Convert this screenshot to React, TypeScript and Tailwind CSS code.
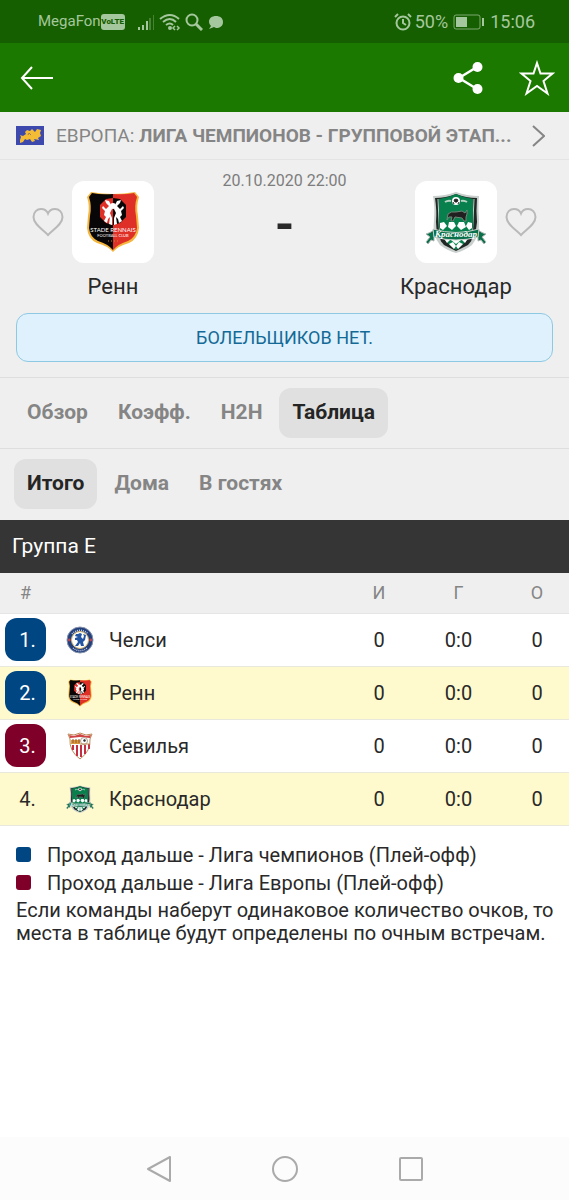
import React from "react";

const RennesCrest = ({ className }: { className: string }) => (
  <svg viewBox="0 0 54 62" className={className} aria-hidden="true">
    <path d="M5 1Q27 5 49 1L53 6Q50 15 52 25L53 37Q52 48 43 52Q32 55 27 61Q22 55 11 52Q2 48 1 37L2 25Q4 15 1 6Z" fill="#f4b63f" />
    <path d="M27 3Q15 4 6 2L3 6Q6 15 4 25L3 37Q4 46 12 50Q22 53 27 59Z" fill="#080606" />
    <path d="M27 3Q39 4 48 2L51 6Q48 15 50 25L51 37Q50 46 42 50Q32 53 27 59Z" fill="#df3028" />
    <path d="M27 7L20 8L14 14V26L20 32L27 34Z" fill="#df3028" />
    <path d="M27 7L34 8L40 14V26L34 32L27 34Z" fill="#080606" />
    <g fill="#fff">
      <path d="M25 14L23 10L19 9L20 12L23 15L20 18L17 15L16 17L19 20L18 24L20 26L18 30L21 32L22 28L24 26L23 33L26 34L26 27L24 22L26 18Z" />
      <path d="M29 14L31 10L35 9L34 12L31 15L34 18L37 15L38 17L35 20L36 24L34 26L36 30L33 32L32 28L30 26L31 33L28 34L28 27L30 22L28 18Z" />
      <circle cx="27" cy="15" r="3" />
    </g>
    <text x="27" y="41" textAnchor="middle" fontFamily="Lato, sans-serif" fontSize="6" fill="#fff">STADE RENNAIS</text>
    <text x="27" y="46" textAnchor="middle" fontFamily="Lato, sans-serif" fontSize="4" fill="#fff">FOOTBALL CLUB</text>
    <path d="M22 50H32" stroke="#c9862c" strokeWidth="1" strokeDasharray="1 2" />
  </svg>
);

const KrasnodarCrest = ({ className }: { className: string }) => (
  <svg viewBox="0 0 62 62" className={className} aria-hidden="true">
    <path d="M8 5Q20 5 31 1Q42 5 54 5Q53 15 54 28Q55 44 47 54Q39 60 31 62Q23 60 15 54Q7 44 9 28Q10 15 8 5Z" fill="#c9cfcc" />
    <path d="M10 7Q21 7 31 3Q41 7 52 7Q51 20 52 31Q51 46 43 54L31 60L19 54Q11 46 11 31Q12 20 10 7Z" fill="#202724" />
    <path d="M13 8L15 52" stroke="#c9cfcc" strokeWidth="1" />
    <path d="M49 8L47 52" stroke="#c9cfcc" strokeWidth="1" />
    <path d="M14 8Q23 7 31 3Q39 7 48 8V36Q46 49 31 59Q16 49 14 36Z" fill="#08804d" />
    <g fill="#fff">
      <path d="M15 32L19 31L22 35L18 39L15 37ZM24 31H29L31 35L27 39L23 36ZM34 31H39L41 36L36 39L32 35ZM43 31L47 32V37L44 39L41 35Z" />
      <path d="M18 46L23 44L26 48L22 52ZM28 45H34L36 49L31 53L26 49ZM39 44L44 46L40 52L36 48ZM24 53L28 51L31 55L29 58ZM34 51L38 53L33 58L31 55Z" />
      <circle cx="31" cy="10" r="4" />
    </g>
    <path d="M31 8L33 9L32 11H30L29 9ZM28 11L29 13M34 11L33 13" fill="#202724" stroke="#202724" />
    <path d="M20 11Q23 9 26 10M36 10Q39 9 42 11" fill="none" stroke="#b5d1c2" strokeWidth="2" />
    <path d="M22 29L23 23Q26 20 31 21L37 20L40 22L42 19V23L41 26L41 30H39L37 27L30 26L28 30H26L27 26L24 26Z" fill="#211f20" stroke="#6f8878" strokeWidth="1" />
    <path d="M1 51L5 46L1 43Q5 42 9 39V50L6 49L3 53ZM61 51L57 46L61 43Q57 42 53 39V50L56 49L59 53Z" fill="#08704a" stroke="#adb6b2" />
    <path d="M8 38Q31 45 54 38L53 46Q31 52 9 46Z" fill="#08704a" stroke="#c9cfcc" strokeWidth="1" />
    <text x="31" y="46" textAnchor="middle" fontFamily="Liberation Serif, serif" fontStyle="italic" fontWeight="700" fontSize="9" fill="#fff">Краснодар</text>
  </svg>
);

const ChelseaCrest = ({ className }: { className: string }) => (
  <svg viewBox="0 0 28 28" className={className} aria-hidden="true">
    <circle cx="14" cy="14" r="13" fill="#233f7c" stroke="#8794ad" />
    <circle cx="14" cy="14" r="8.5" fill="#fff" stroke="#d4b56a" />
    <path d="M6 8A10.500 10.500 0 0 1 22 8M7 22A10.500 10.500 0 0 0 21 22" fill="none" stroke="#c1cbe0" strokeWidth="1.5" strokeDasharray="1 1" />
    <circle cx="3.3" cy="14" r="1.4" fill="#b8475c" />
    <circle cx="24.7" cy="14" r="1.4" fill="#b8475c" />
    <path d="M12 8L14 7L16 8L15 11L17 13L18 10L17 8L20 9L19 14L17 16L18 20H15L14 17L12 20H9L12 16L11 14H9V12L12 11L9 10L10 8Z" fill="#2455a2" />
  </svg>
);

const SevillaCrest = ({ className }: { className: string }) => (
  <svg viewBox="0 0 28 28" className={className} aria-hidden="true">
    <path d="M2 2L8 3L14 1L20 3L26 2L24 7Q25 19 14 27Q3 19 4 7Z" fill="#fff" stroke="#c08a58" />
    <path d="M7 13V18M11 13V24M15 13V25M19 13V22M23 12V17" stroke="#c52f43" strokeWidth="2" />
    <path d="M3 3L8 4L14 2L20 4L25 3L24 6L14 5L4 6Z" fill="#cf4545" />
    <path d="M5 8H14V12H5Z" fill="#d99a3d" />
    <path d="M7 7V11M10 7V11M13 7V11" stroke="#995126" />
    <circle cx="18" cy="9" r="3.5" fill="#fff" stroke="#aaa18f" />
    <path d="M14 12H24" stroke="#c08a58" />
    <path d="M17 8L19 7L20 9L18 10Z" fill="#333" />
  </svg>
);

const Heart = () => (
  <svg viewBox="0 0 32 30" className="h-[30px] w-8 fill-none stroke-[#b9b9b9] stroke-2" aria-hidden="true">
    <path d="M16 28C10 22 1.500 17 1.500 10C1.500 5 5 2 9 2C12 2 15 4 16 6.500C17 4 20 2 23 2C27 2 30.500 5 30.500 10C30.500 17 22 22 16 28Z" />
  </svg>
);

type Crest = React.ComponentType<{ className: string }>;

const rows: { name: string; Crest: Crest; badge: string; row: string }[] = [
  { name: "Челси", Crest: ChelseaCrest, badge: "bg-[#004682] text-white", row: "bg-white" },
  { name: "Ренн", Crest: RennesCrest, badge: "bg-[#004682] text-white", row: "bg-[#fffacd]" },
  { name: "Севилья", Crest: SevillaCrest, badge: "bg-[#7f0029] text-white", row: "bg-white" },
  { name: "Краснодар", Crest: KrasnodarCrest, badge: "", row: "bg-[#fffacd]" },
];

function Team({ name, Crest, away = false }: { name: string; Crest: Crest; away?: boolean }) {
  return (
    <div className={away ? "flex w-[154px] flex-col items-start" : "flex w-[154px] flex-col items-end"}>
      <div className={away ? "flex flex-row-reverse items-center gap-2" : "flex items-center gap-2"}>
        <button aria-label={"В избранное: " + name}><Heart /></button>
        <div className="flex size-[82px] items-center justify-center rounded-xl bg-white">
          <Crest className="size-[62px]" />
        </div>
      </div>
      <span className="mt-2 w-[82px] text-center text-[22px] leading-8"><span className="-mx-8 block">{name}</span></span>
    </div>
  );
}

function Tabs({ items, active, label }: { items: string[]; active: string; label: string }) {
  return (
    <nav aria-label={label} className="flex h-[71px] items-center gap-1 border-t border-[#dedede] px-[14px] text-[21px] font-bold text-[#858585]">
      {items.map((item) => (
        <button
          key={item}
          aria-pressed={item === active}
          className={item === active ? "h-[50px] rounded-xl bg-[#e0e0e0] px-[13px] text-[#252525]" : "h-[50px] rounded-xl px-[13px]"}
        >
          {item}
        </button>
      ))}
    </nav>
  );
}

export default function App() {
  return (
    <div className="flex min-h-screen flex-col bg-white font-['Roboto','Noto_Sans',sans-serif] text-[#292929]">
      <div className="flex h-[43px] items-center justify-between bg-[#165f00] pr-[34px] pl-[38px] text-[#a5c79d]">
        <div className="flex items-center">
          <span className="text-[15px]">MegaFon</span>
          <span className="flex h-4 w-6 items-center justify-center rounded-[3px] bg-[#a5c79d] text-[8px] font-black text-[#165f00]">VoLTE</span>
          <svg viewBox="0 0 18 18" className="ml-3 h-[18px] w-[18px] fill-current" aria-hidden="true">
            <path d="M1 14h2v3H1zM5 12h2v5H5zM9 8h2v9H9z" /><path opacity=".35" d="M12 5h2v12h-2zM16 2h1v15h-1z" />
          </svg>
          <svg viewBox="0 0 22 18" className="ml-1 h-[18px] w-[22px] fill-none stroke-current stroke-2" aria-hidden="true">
            <path d="M1 6Q11-2 20 6M4 9Q11 3 17 9M7 12Q11 9 14 12" /><circle cx="11" cy="15" r="1" /><path d="M16 13L14 15L16 17M18 13L20 15L18 17" strokeWidth="1.5" />
          </svg>
          <svg viewBox="0 0 18 18" className="ml-1 size-[18px] fill-none stroke-current stroke-2" aria-hidden="true"><circle cx="7" cy="7" r="5.5" /><path d="M11 11L17 17" strokeWidth="3" /></svg>
          <svg viewBox="0 0 16 16" className="ml-[5px] size-4 fill-current" aria-hidden="true"><path d="M8 2C12 2 15 4 15 8S12 14 8 14L6 13L1 15L3 12Q1 10 1 8C1 4 4 2 8 2Z" /></svg>
        </div>
        <div className="flex items-center text-[18px]">
          <svg viewBox="0 0 18 18" className="mr-[3px] size-[18px] fill-none stroke-current stroke-2" aria-hidden="true"><circle cx="9" cy="10" r="6.5" /><path d="M9 6V10L12 12M1 4L4 1M14 1L17 4" /></svg>
          <span>50%</span>
          <svg viewBox="0 0 32 16" className="ml-[5px] h-4 w-8" aria-hidden="true"><rect x="1" y="1" width="26" height="14" rx="2" fill="none" stroke="currentColor" opacity=".7" /><path d="M3 3h11v10H3zM29 4h2v8h-2z" fill="currentColor" /></svg>
          <span className="ml-[5px]">15:06</span>
        </div>
      </div>

      <header className="flex h-[69px] items-center justify-between bg-[#1c7900] pr-[14px] pl-5 text-white">
        <button aria-label="Назад"><svg viewBox="0 0 34 24" className="h-6 w-[34px] fill-none stroke-current stroke-2" aria-hidden="true"><path d="M33 12H2M12 1L2 12L12 23" /></svg></button>
        <div className="flex items-center gap-[36px]">
          <button aria-label="Поделиться"><svg viewBox="0 0 30 32" className="h-8 w-[30px] fill-current" aria-hidden="true"><path d="M24 5L6 16L24 27" fill="none" stroke="currentColor" strokeWidth="2.5" /><circle cx="5.5" cy="16" r="5" /><circle cx="24.5" cy="5" r="5" /><circle cx="24.5" cy="27" r="5" /></svg></button>
          <button aria-label="В избранное"><svg viewBox="0 0 36 36" className="size-9 fill-none stroke-current stroke-2" aria-hidden="true"><path d="M18 3L21.500 13.500H33.500L24.500 21L28.500 33.500L18 26L7.500 33.500L11.500 21L2.500 13.500H14.500Z" /></svg></button>
        </div>
      </header>

      <main className="flex-1">
        <div className="bg-[#efefef] pb-px">
          <a href="#league" className="flex h-[48px] items-center border-b border-[#e4e4e4] pr-6 pl-4 text-[#858585]">
            <svg viewBox="0 0 28 19" className="h-[19px] w-7 shrink-0" aria-hidden="true"><path d="M0 0H28V19H0Z" fill="#3d49ad" /><path d="M4 14L5 11L4 9L7 10L10 8L9 6L11 4L14 5L16 3L19 6L21 3L25 4L24 7L25 10L22 12L23 14L18 13L19 15L16 16L14 13L11 14L9 13L7 16L4 17Z" fill="#f4bc35" /><path d="M12 9L13 7L15 9" fill="none" stroke="#9c7d56" /></svg>
            <span className="ml-3 min-w-0 flex-1 truncate text-[19px] leading-6">ЕВРОПА: <b>ЛИГА ЧЕМПИОНОВ - ГРУППОВОЙ ЭТАП...</b></span>
            <svg viewBox="0 0 13 22" className="ml-3 h-[22px] w-[13px] shrink-0 fill-none stroke-current stroke-2" aria-hidden="true"><path d="M1 1L12 11L1 21" /></svg>
          </a>

          <section className="flex h-[153px] justify-between pt-[21px]">
            <Team name="Ренн" Crest={RennesCrest} />
            <div className="-mt-3 text-center">
              <time className="block text-[16px] leading-6 text-[#7d7d7d]">20.10.2020 22:00</time>
              <strong className="mt-1 block text-[50px] leading-[56px]">-</strong>
            </div>
            <Team name="Краснодар" Crest={KrasnodarCrest} away />
          </section>

          <div className="px-4 pb-[15px]">
            <p className="flex h-[49px] items-center justify-center rounded-xl border border-[#8ec9e3] bg-[#dff1fc] text-[18px] text-[#146a96]">БОЛЕЛЬЩИКОВ НЕТ.</p>
          </div>
          <Tabs label="Разделы матча" items={["Обзор", "Коэфф.", "H2H", "Таблица"]} active="Таблица" />
          <Tabs label="Вид таблицы" items={["Итого", "Дома", "В гостях"]} active="Итого" />
        </div>

        <h2 className="flex h-[53px] items-center bg-[#353535] px-3 text-[21px] text-white">Группа E</h2>
        <table className="w-full table-fixed border-collapse text-center text-[20px]">
          <colgroup><col className="w-[51px]" /><col className="w-[58px]" /><col /><col className="w-[66px]" /><col className="w-[93px]" /><col className="w-[64px]" /></colgroup>
          <thead>
            <tr className="h-10 border-b border-[#e5e5e5] bg-[#efefef] text-[18px] text-[#858585]">
              <th className="font-normal">#</th><td /><td /><th className="font-normal">И</th><th className="font-normal">Г</th><th className="font-normal">О</th>
            </tr>
          </thead>
          <tbody>
            {rows.map(({ name, Crest, badge, row }, index) => (
              <tr key={name} className={"h-[53px] border-b border-[#e8e8dc] " + row}>
                <td className="p-0"><span className={"ml-[5px] flex h-[43px] w-[41px] items-center justify-center rounded-xl pl-1 " + badge}>{index + 1}.</span></td>
                <td className="p-0"><Crest className="mx-auto size-7" /></td>
                <td className="p-0 text-left">{name}</td>
                <td className="p-0">0</td><td className="p-0">0:0</td><td className="p-0">0</td>
              </tr>
            ))}
          </tbody>
        </table>

        <div className="pt-[15px] pr-3 pl-4 text-[20px] leading-[23px]">
          <ul className="leading-[28px]">
            <li className="flex items-center"><span className="mr-4 size-[15px] rounded-[3px] bg-[#004682]" />Проход дальше - Лига чемпионов (Плей-офф)</li>
            <li className="flex items-center"><span className="mr-4 size-[15px] rounded-[3px] bg-[#7f0029]" />Проход дальше - Лига Европы (Плей-офф)</li>
          </ul>
          <p className="mt-0.5">Если команды наберут одинаковое количество очков, то места в таблице будут определены по очным встречам.</p>
        </div>
      </main>

      <nav aria-label="Системная навигация" className="flex h-[63px] items-center justify-center gap-[100px] bg-[#fcfcfc] text-[#aaa]">
        <button aria-label="Назад"><svg viewBox="0 0 26 26" className="size-[26px] fill-none stroke-current stroke-2" aria-hidden="true"><path d="M24 1V25L2 13Z" strokeLinejoin="round" /></svg></button>
        <button aria-label="Домой"><svg viewBox="0 0 26 26" className="size-[26px] fill-none stroke-current stroke-2" aria-hidden="true"><circle cx="13" cy="13" r="12" /></svg></button>
        <button aria-label="Недавние"><svg viewBox="0 0 26 26" className="size-[26px] fill-none stroke-current stroke-2" aria-hidden="true"><rect x="2" y="2" width="22" height="22" rx="1" /></svg></button>
      </nav>
    </div>
  );
}
